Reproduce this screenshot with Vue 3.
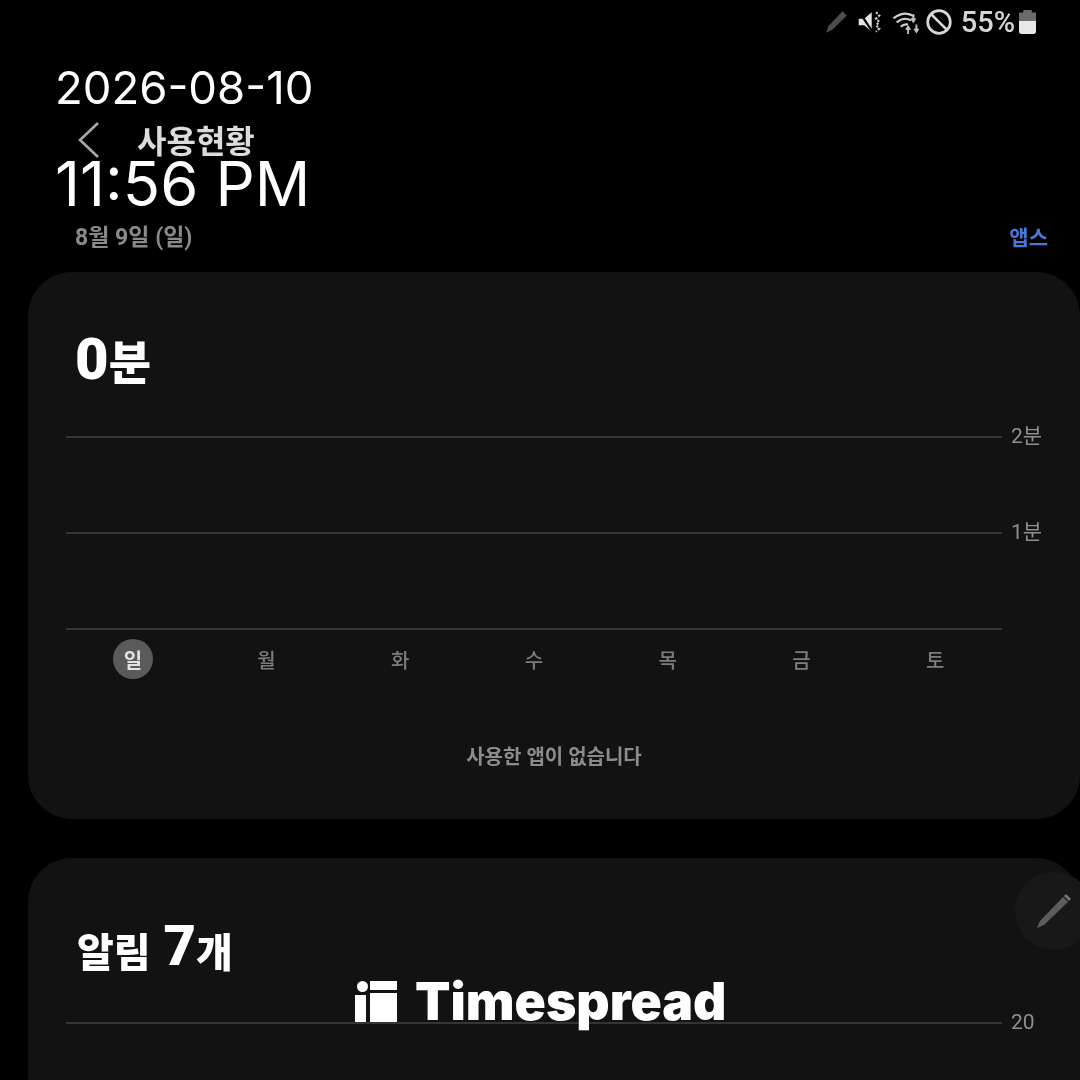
<script setup>
const days = ['일', '월', '화', '수', '목', '금', '토']
</script>

<template>
  <div class="screen">
    <div class="shot">
      <!-- status bar -->
      <div class="status">
        <svg class="ic-pen" width="26" height="26" viewBox="2 2 22 24">
          <path d="M3 24 L5 18 L18 4 L22 8 L9 21 Z" fill="#4d4d4d" />
        </svg>
        <svg class="ic-mute" width="24" height="26" viewBox="0 0 21 24">
          <path d="M1 9 H6 L13 3 V21 L6 15 H1 Z" fill="#e4e4e4" />
          <path d="M1 2 L15 23" stroke="#000" stroke-width="2" />
          <path d="M17 3 L20 6 L17 9 L20 12 L17 15 L20 18 L17 21" fill="none" stroke="#cfcfcf" stroke-width="2" stroke-dasharray="2 1.5" />
        </svg>
        <svg class="ic-wifi" width="30" height="26" viewBox="0 0 26 25">
          <path d="M1 9 Q11 1 21 7 M4 13 Q11 7 18 11 M8 17 Q11 14 15 15" fill="none" stroke="#cfcfcf" stroke-width="2" />
          <path d="M20 5 V11 M18 9 L20 12 L22 9 M15 17 V24 M13 20 L15 17 L17 20 M23 15 V22 M21 19 L23 22 L25 19" fill="none" stroke="#bdbdbd" stroke-width="1.8" />
        </svg>
        <svg class="ic-ban" width="26" height="26" viewBox="1.5 0.5 23 23">
          <circle cx="13" cy="12" r="10" fill="none" stroke="#d8d8d8" stroke-width="2.4" />
          <path d="M6 5 L20 19" stroke="#d8d8d8" stroke-width="2.4" />
        </svg>
        <span class="battery-text">55%</span>
        <div class="battery"><div class="battery-fill"></div></div>
      </div>

      <!-- header -->
      <div class="header">
        <svg class="back" width="24" height="38" viewBox="0 0 24 38">
          <path d="M21 2 L3 19 L21 36" fill="none" stroke="#a8a8a8" stroke-width="2.6" />
        </svg>
        <span class="title">사용현황</span>
      </div>

      <div class="sub-row">
        <span class="date">8월 9일 (일)</span>
        <span class="apps">앱스</span>
      </div>

      <!-- usage card -->
      <section class="card">
        <div class="big"><b>0</b><span>분</span></div>
        <div class="chart">
          <div class="line-row"><i></i><em>2분</em></div>
          <div class="line-row"><i></i><em>1분</em></div>
          <div class="line-row base"><i></i></div>
        </div>
        <div class="days">
          <div v-for="(d, idx) in days" :key="d" class="day" :class="{ today: idx === 0 }">
            <span>{{ d }}</span>
          </div>
        </div>
        <p class="empty">사용한 앱이 없습니다</p>
      </section>

      <!-- notifications card -->
      <section class="card second">
        <div class="big small-head"><span class="ko">알림</span><b>7</b><span class="ko">개</span></div>
        <div class="chart">
          <div class="line-row"><i></i><em>20</em></div>
        </div>
      </section>

      <div class="fab">
        <svg width="40" height="40" viewBox="0 0 40 40">
          <path d="M3 37 L6 30 L29 6 L34 11 L10 34 Z" fill="#5c5c5c" />
          <path d="M31 4 L36 9" stroke="#757575" stroke-width="3" />
        </svg>
      </div>
    </div>

    <!-- overlays -->
    <div class="stamp">
      <div class="stamp-date">2026-08-10</div>
      <div class="stamp-time">11:56 PM</div>
    </div>

    <div class="brand">
      <svg width="42" height="42" viewBox="0 0 42 42">
        <circle cx="7.5" cy="6.5" r="5.5" fill="#fff" />
        <rect x="0" y="15" width="11" height="27" fill="#fff" />
        <rect x="15" y="1" width="27" height="9" fill="#fff" />
        <rect x="15" y="13" width="27" height="29" fill="#fff" />
      </svg>
      <span>Timespread</span>
    </div>
  </div>
</template>

<style>
html, body {
  margin: 0;
  background: #000;
}
</style>

<style scoped>
.screen {
  position: relative;
  width: 1080px;
  height: 1080px;
  overflow: hidden;
  background: #000;
  font-family: Roboto, "Noto Sans CJK KR", sans-serif;
  color: #fff;
}

/* the source capture is soft, only the overlays are crisp */
.shot {
  position: relative;
  height: 1080px;
  filter: blur(0.7px);
}

.status {
  height: 44px;
  box-sizing: border-box;
  padding-right: 44px;
  display: flex;
  justify-content: flex-end;
  align-items: center;
  gap: 4px;
}

.ic-mute {
  margin-left: 3px;
}

.ic-wifi {
  margin-left: 6px;
}

.ic-ban {
  margin-left: 1px;
}

.battery-text {
  font-size: 29px;
  font-weight: 500;
  color: #d6d6d6;
  margin-left: 5px;
}

.battery {
  width: 17px;
  height: 24px;
  border-radius: 3px;
  background: #6b6b6b;
  clip-path: polygon(25% 0, 75% 0, 75% 10%, 100% 10%, 100% 100%, 0 100%, 0 10%, 25% 10%);
  position: relative;
  overflow: hidden;
}

.battery-fill {
  position: absolute;
  left: 0;
  right: 0;
  bottom: 0;
  height: 13px;
  background: #e8e8e8;
}

.header {
  height: 150px;
  box-sizing: border-box;
  padding: 77px 0 0 77px;
  display: flex;
  align-items: flex-start;
  gap: 36px;
}

.title {
  font-size: 32px;
  font-weight: 700;
  line-height: 36px;
  color: #dcdcdc;
  margin-top: 3px;
}

.sub-row {
  height: 78px;
  box-sizing: border-box;
  padding: 28px 32px 0 75px;
  display: flex;
  justify-content: space-between;
  align-items: flex-start;
  line-height: 32px;
}

.date {
  font-size: 23px;
  font-weight: 700;
  color: #8a8a8a;
}

.apps {
  font-size: 21px;
  font-weight: 700;
  color: #4a78d8;
}

.card {
  margin-left: 28px;
  height: 547px;
  box-sizing: border-box;
  padding: 57px 0 0 38px;
  background: #121212;
  border-radius: 44px;
}

.second {
  margin-top: 39px;
  padding-top: 58px;
}

.big {
  height: 60px;
  padding-left: 9px;
  display: flex;
  align-items: center;
  font-size: 46px;
  font-weight: 900;
}

.big b {
  font-size: 58px;
  font-weight: 900;
  line-height: 60px;
}

.small-head {
  padding-left: 11px;
  font-size: 40px;
}

.small-head .ko {
  margin-top: 8px;
}

.small-head b {
  margin: 0 0 0 13px;
  font-size: 56px;
}

.chart {
  margin-top: 47px;
}

.second .chart {
  margin-top: 46px;
}

.line-row {
  height: 96px;
  display: flex;
  align-items: flex-start;
}

.line-row i {
  display: block;
  width: 936px;
  height: 2px;
  background: #343434;
}

.line-row em {
  font-style: normal;
  font-size: 21px;
  line-height: 24px;
  color: #8e8e8e;
  margin: -12px 0 0 9px;
}

.line-row.base {
  height: 2px;
}

.days {
  width: 936px;
  display: grid;
  grid-template-columns: repeat(7, 1fr);
  margin-top: 9px;
}

.day {
  display: flex;
  justify-content: center;
  align-items: center;
  height: 40px;
  font-size: 20px;
  font-weight: 500;
  color: #7d7d7d;
}

.day span {
  width: 40px;
  height: 40px;
  border-radius: 50%;
  display: flex;
  justify-content: center;
  align-items: center;
}

.day.today span {
  background: #5a5a5a;
  color: #e2e2e2;
  font-weight: 700;
}

.empty {
  margin: 64px 0 0 -38px;
  text-align: center;
  font-size: 20px;
  line-height: 28px;
  font-weight: 700;
  color: #8c8c8c;
}

/* burned-in timestamp */
.stamp {
  position: absolute;
  left: 55px;
  top: 60px;
  font-family: Inter, Roboto, sans-serif;
  color: #fff;
}

.stamp-date {
  font-size: 45.5px;
  line-height: 56px;
  font-weight: 400;
}

.stamp-time {
  margin-top: 32px;
  font-size: 61.5px;
  line-height: 72px;
  font-weight: 400;
}

.fab {
  position: absolute;
  left: 1015px;
  top: 872px;
  width: 78px;
  height: 78px;
  border-radius: 50%;
  background: #181818;
  display: flex;
  align-items: center;
  padding-left: 19px;
  box-sizing: border-box;
}

.brand {
  position: absolute;
  left: 355px;
  top: 974px;
  display: flex;
  align-items: center;
  gap: 18px;
  font-family: Inter, Roboto, sans-serif;
  font-size: 51.7px;
  line-height: 54px;
  font-weight: 900;
  color: #fff;
}
</style>
